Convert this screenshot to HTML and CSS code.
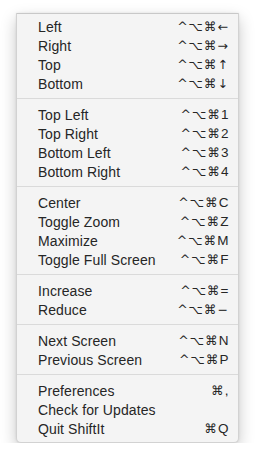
FILE: index.html
```html
<!DOCTYPE html>
<html>
<head>
<meta charset="utf-8">
<link rel="stylesheet" href="styles.css">
</head>
<body>
<div class="menu">
  <div class="item"><span class="label">Left</span><span class="key"><span class="sym">^⌥⌘←</span></span></div>
  <div class="item"><span class="label">Right</span><span class="key"><span class="sym">^⌥⌘→</span></span></div>
  <div class="item"><span class="label">Top</span><span class="key"><span class="sym">^⌥⌘↑</span></span></div>
  <div class="item"><span class="label">Bottom</span><span class="key"><span class="sym">^⌥⌘↓</span></span></div>
  <div class="sep"></div>
  <div class="item"><span class="label">Top Left</span><span class="key"><span class="sym">^⌥⌘</span>1</span></div>
  <div class="item"><span class="label">Top Right</span><span class="key"><span class="sym">^⌥⌘</span>2</span></div>
  <div class="item"><span class="label">Bottom Left</span><span class="key"><span class="sym">^⌥⌘</span>3</span></div>
  <div class="item"><span class="label">Bottom Right</span><span class="key"><span class="sym">^⌥⌘</span>4</span></div>
  <div class="sep"></div>
  <div class="item"><span class="label">Center</span><span class="key"><span class="sym">^⌥⌘</span>C</span></div>
  <div class="item"><span class="label">Toggle Zoom</span><span class="key"><span class="sym">^⌥⌘</span>Z</span></div>
  <div class="item"><span class="label">Maximize</span><span class="key"><span class="sym">^⌥⌘</span>M</span></div>
  <div class="item"><span class="label">Toggle Full Screen</span><span class="key"><span class="sym">^⌥⌘</span>F</span></div>
  <div class="sep"></div>
  <div class="item"><span class="label">Increase</span><span class="key"><span class="sym">^⌥⌘</span>=</span></div>
  <div class="item"><span class="label">Reduce</span><span class="key"><span class="sym">^⌥⌘−</span></span></div>
  <div class="sep"></div>
  <div class="item"><span class="label">Next Screen</span><span class="key"><span class="sym">^⌥⌘</span>N</span></div>
  <div class="item"><span class="label">Previous Screen</span><span class="key"><span class="sym">^⌥⌘</span>P</span></div>
  <div class="sep"></div>
  <div class="item"><span class="label">Preferences</span><span class="key"><span class="sym">⌘</span>,</span></div>
  <div class="item"><span class="label">Check for Updates</span><span class="key"></span></div>
  <div class="item"><span class="label">Quit ShiftIt</span><span class="key"><span class="sym">⌘</span>Q</span></div>
</div>
</body>
</html>
```
FILE: styles.css
```css
html, body {
  margin: 0;
  padding: 0;
  background: #ffffff;
}
body {
  padding: 13px 0 0 16px;
  font-family: "Liberation Sans", "DejaVu Sans", sans-serif;
}
.menu {
  width: 221px;
  padding: 3px 0 4px;
  background: #f4f4f4;
  border: 1px solid #d2d2d2;
  border-top-color: #c8c8c8;
  border-radius: 1px 1px 5px 5px;
  box-shadow: 0 6px 16px rgba(0, 0, 0, 0.22), 0 0 3px rgba(0, 0, 0, 0.08);
}
.item {
  display: flex;
  justify-content: space-between;
  align-items: center;
  height: 19px;
  padding: 0 9px 0 21px;
  font-size: 14px;
  letter-spacing: 0.1px;
  color: #262626;
}
.key {
  font-family: "Liberation Sans", sans-serif;
  font-size: 13.5px;
  letter-spacing: 0.5px;
}
.sym {
  font-family: "DejaVu Sans", sans-serif;
  font-size: 12.5px;
  letter-spacing: 1px;
}
.sep {
  height: 1px;
  margin: 5px 0 6px;
  background: #dadada;
}
```
